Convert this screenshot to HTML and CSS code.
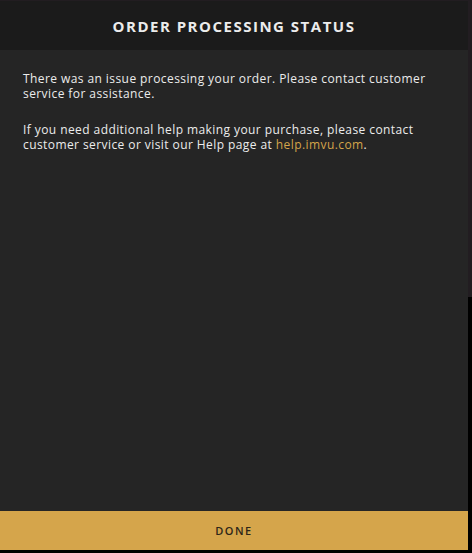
FILE: index.html
```html
<!DOCTYPE html>
<html>
<head>
<meta charset="utf-8">
<link rel="stylesheet" href="styles.css">
</head>
<body>
<div class="dialog">
  <div class="header"><h1 class="title">ORDER PROCESSING STATUS</h1></div>
  <div class="content">
    <p class="para">There was an issue processing your order. Please contact customer service for assistance.</p>
    <p class="para">If you need additional help making your purchase, please contact customer service or visit our Help page at <a class="link" href="#">help.imvu.com</a>.</p>
  </div>
  <button class="done">DONE</button>
</div>
</body>
</html>
```
FILE: styles.css
```css
html, body {
  margin: 0;
  padding: 0;
}
body {
  width: 472px;
  height: 553px;
  overflow: hidden;
  background: linear-gradient(to bottom, #221d21 0, #221d21 297px, #000 297px);
  font-family: "Open Sans", "DejaVu Sans", sans-serif;
}
.dialog {
  margin-top: 1px;
  width: 468px;
  height: 549px;
  display: flex;
  flex-direction: column;
  background: #252525;
}
.header {
  height: 49px;
  background: #1b1b1b;
  display: flex;
  align-items: center;
  justify-content: center;
}
.title {
  margin: 0;
  color: #ececec;
  font-size: 15px;
  font-weight: 700;
  letter-spacing: 1.5px;
}
.content {
  flex: 1;
  padding: 21px 23px 0;
}
.para {
  margin: 0 0 21px;
  color: #ececec;
  font-size: 12px;
  letter-spacing: 0.42px;
  line-height: 15px;
}
.link {
  color: #d4a44a;
  text-decoration: none;
}
.done {
  height: 39px;
  border: 0;
  margin: 0;
  padding: 0;
  background: #d5a54b;
  color: #2e2618;
  font-family: inherit;
  font-size: 11px;
  font-weight: 600;
  letter-spacing: 1.5px;
}
```
